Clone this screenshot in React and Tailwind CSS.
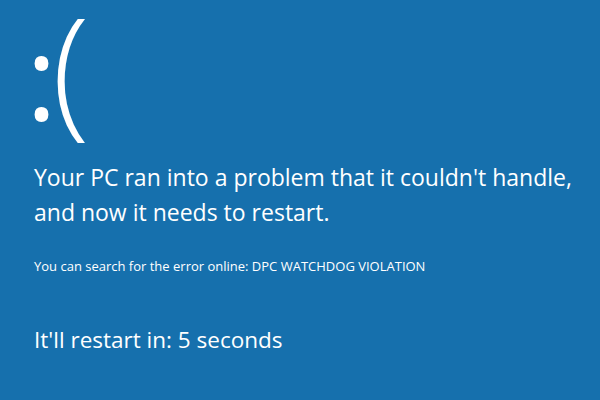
import React from 'react';

const App = () => {
    return (
        <div className="w-[600px] h-[400px] bg-[#1670ad] text-white overflow-hidden font-['Open_Sans','Noto_Sans',sans-serif]">
            {/* sad face */}
            <div className="flex items-baseline pl-[26px]">
                <span className="text-[118px] leading-none font-normal">:</span>
                <span className="-ml-[5px] text-[138px] leading-[0.96] font-light origin-bottom scale-y-[1.03]">(</span>
            </div>
            <div className="pl-[34px]">
                <div className="mt-[26px] text-[23px] leading-[35px]">
                    <p>Your PC ran into a problem that it couldn't handle,</p>
                    <p>and now it needs to restart.</p>
                </div>
                <p className="mt-[28px] text-[13px] leading-[16px]">
                    You can search for the error online: DPC WATCHDOG VIOLATION
                </p>
                <p className="mt-[51px] text-[22.5px] leading-[30px]">It'll restart in: 5 seconds</p>
            </div>
        </div>
    );
};

export default App;
